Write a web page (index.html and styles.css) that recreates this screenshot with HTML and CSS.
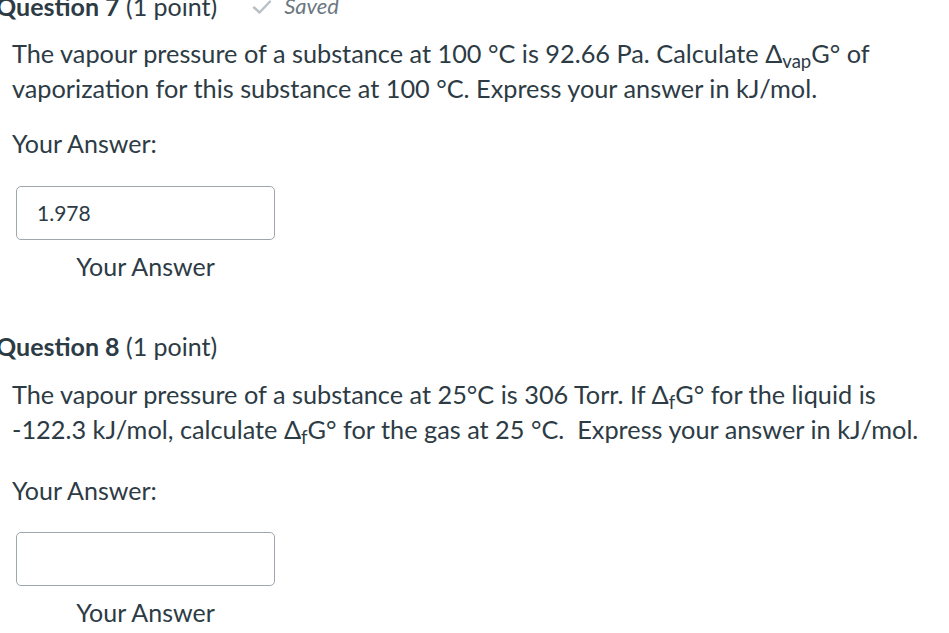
FILE: index.html
```html
<!DOCTYPE html>
<html>
<head>
<meta charset="utf-8">
<link rel="stylesheet" href="styles.css">
</head>
<body>
<div class="page">
  <section class="question first">
    <div class="q-header">
      <h2 class="q-title"><span class="q-num">Question 7</span> (1 point)</h2>
      <span class="saved">
        <svg class="check" width="20" height="16" viewBox="0 0 20 16"><path d="M2 8.5 L7.5 13.5 L18 2.5" fill="none" stroke="#b7c0c6" stroke-width="2.4" stroke-linecap="round" stroke-linejoin="round"/></svg>
        <em>Saved</em>
      </span>
    </div>
    <p class="q-text">The vapour pressure of a substance at 100 °C is 92.66 Pa. Calculate Δ<sub>vap</sub>G° of vaporization for this substance at 100 °C. Express your answer in kJ/mol.</p>
    <div class="answer-label">Your Answer:</div>
    <div class="answer">
      <div class="answer-box">1.978</div>
      <div class="answer-caption">Your Answer</div>
    </div>
  </section>
  <section class="question second">
    <div class="q-header">
      <h2 class="q-title"><span class="q-num">Question 8</span> (1 point)</h2>
    </div>
    <p class="q-text">The vapour pressure of a substance at 25°C is 306 Torr. If Δ<sub>f</sub>G° for the liquid is -122.3 kJ/mol, calculate Δ<sub>f</sub>G° for the gas at 25 °C.&nbsp; Express your answer in kJ/mol.</p>
    <div class="answer-label">Your Answer:</div>
    <div class="answer">
      <div class="answer-box"></div>
      <div class="answer-caption">Your Answer</div>
    </div>
  </section>
</div>
</body>
</html>
```
FILE: styles.css
```css
html, body {
  margin: 0;
  padding: 0;
  background: #ffffff;
}
body {
  font-family: Lato, "Open Sans", sans-serif;
  color: #2d3b45;
  overflow: hidden;
}
.page {
  width: 949px;
}
.question {
  display: flex;
  flex-direction: column;
}
.question.first {
  margin-top: -9px;
}
.question.second {
  margin-top: 47px;
}
.q-header {
  display: flex;
  align-items: center;
  margin-left: -4px;
  height: 30px;
}
.q-title {
  margin: 0;
  font-size: 25px;
  line-height: 30px;
  font-weight: 400;
  color: #2d3b45;
}
.q-num {
  font-weight: 700;
}
.saved {
  display: flex;
  align-items: center;
  gap: 12px;
  margin-left: 35px;
  color: #6b7780;
  font-size: 22px;
  line-height: 30px;
}
.saved em {
  font-style: italic;
}
.check {
  display: block;
  margin-top: 2px;
}
.q-text {
  margin: 15px 0 0 12px;
  max-width: 918px;
  font-size: 25.3px;
  line-height: 35px;
}
.second .q-text {
  margin-top: 16px;
}
.q-text sub {
  font-size: 18.5px;
  line-height: 0;
  vertical-align: -5px;
}
.answer-label {
  margin: 20px 0 0 12px;
  font-size: 25px;
  line-height: 35px;
}
.second .answer-label {
  margin-top: 26px;
}
.answer {
  margin: 25px 0 0 16px;
  width: 259px;
  display: flex;
  flex-direction: column;
  align-items: stretch;
}
.second .answer {
  margin-top: 24px;
}
.answer-box {
  box-sizing: border-box;
  height: 54px;
  border: 1px solid #9ea7ae;
  border-radius: 5px;
  padding: 0 20px;
  font-size: 21px;
  line-height: 52px;
  color: #2d3b45;
  background: #fff;
}
.answer-caption {
  margin-top: 9px;
  text-align: center;
  font-size: 25px;
  line-height: 35px;
}
.second .answer-caption {
  margin-top: 9px;
}
```
